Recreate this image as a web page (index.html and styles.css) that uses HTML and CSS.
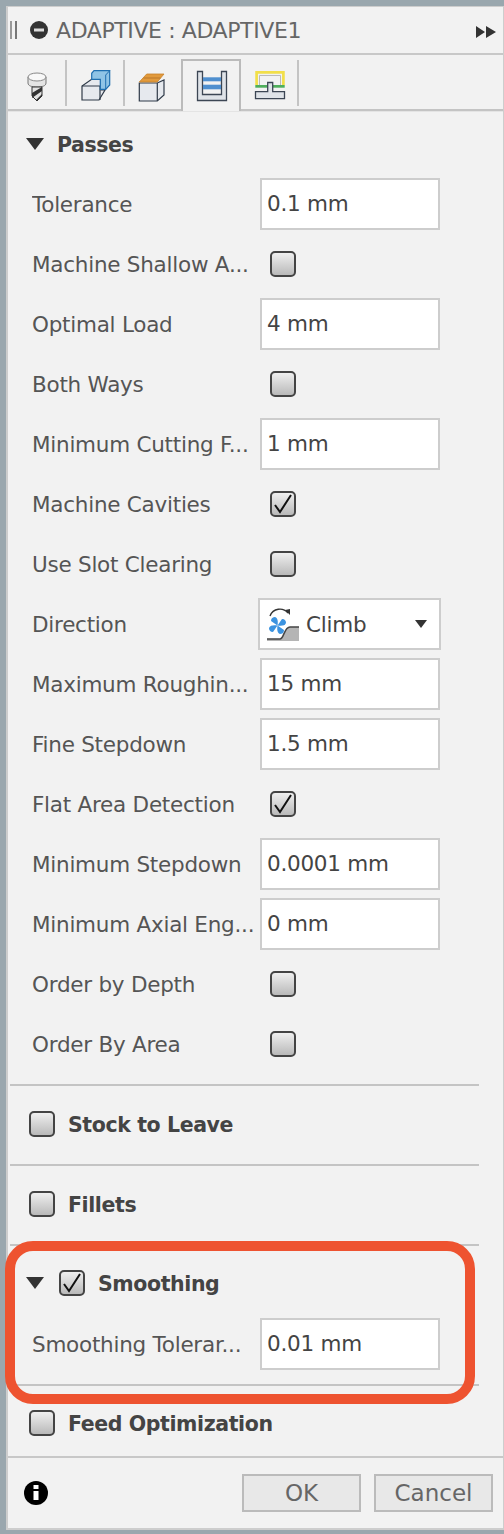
FILE: index.html
```html
<!DOCTYPE html>
<html lang="en">
<head>
<meta charset="UTF-8">
<title>ADAPTIVE : ADAPTIVE1</title>
<link rel="stylesheet" href="styles.css">
</head>
<body>
  <div class="panel">
    <div class="titlebar">
      <span class="grip"></span>
      <svg class="title-icon" width="18" height="18" viewBox="0 0 18 18"><circle cx="9" cy="9" r="9" fill="#333"/><rect x="4" y="7.5" width="10" height="3" fill="#ddd"/></svg>
      <span class="title">ADAPTIVE : ADAPTIVE1</span>
      <svg class="title-more" width="20" height="12" viewBox="0 0 20 12"><path d="M0 0 L9 6 L0 12Z M10 0 L20 6 L10 12Z" fill="#333"/></svg>
    </div>

    <div class="tabs">
      <div class="tab">
        <svg width="36" height="36" viewBox="0 0 36 36">
          <path d="M9 9 V15 C9 18 13 19 18 19 C23 19 27 18 27 15 V9Z" fill="#e4e4e4" stroke="#777"/>
          <ellipse cx="18" cy="9" rx="9" ry="4" fill="#f8f8f8" stroke="#888"/>
          <path d="M13 19 H23 V28 L18 33 L13 28Z" fill="#e2e2e2" stroke="#333"/>
          <path d="M13 25 L23 19 V23 L13 30Z M17 32 L23 26 V28 L18 33Z" fill="#333"/>
        </svg>
      </div>
      <div class="tab">
        <svg width="36" height="36" viewBox="0 0 36 36">
          <path d="M5 32 V18 L15 11 H24 V22 L28 22 L22 32Z" fill="#e6e9ee" stroke="#2f3a48" stroke-width="1.2"/>
          <path d="M5 18 H23 V32" fill="none" stroke="#2f3a48" stroke-width="1.2"/>
          <path d="M14.7 11.3 V5.3 L17 2.7 H32.7 V17 L28.7 21.3 H23.3 V11.3Z" fill="#8fc4e6" stroke="#1f6fb0" stroke-width="1.2"/>
          <path d="M28.7 7 L32.7 2.7 M28.7 7 V21.3" fill="none" stroke="#1f6fb0" stroke-width="1"/>
        </svg>
      </div>
      <div class="tab">
        <svg width="36" height="36" viewBox="0 0 36 36">
          <path d="M4.3 15 H22.3 L29 12 V27 L22.3 33 H4.3Z" fill="#e6e9ee" stroke="#2f3a48" stroke-width="1.2"/>
          <path d="M22.3 15 V33" fill="none" stroke="#2f3a48" stroke-width="1.2"/>
          <path d="M4.3 14 L11.7 6 H29 L22.3 14Z" fill="#e29a3c" stroke="#c8822a" stroke-width=".8"/>
          <path d="M8.5 10 H25.5" stroke="#b9772a"/>
        </svg>
      </div>
      <div class="tab tab-active">
        <svg width="36" height="36" viewBox="0 0 36 36">
          <path d="M4.5 3.5 H9.5 V26.5 H28.5 V3.5 H33.5 V32.5 H4.5Z" fill="#dfe3e8" stroke="#3c4654" stroke-width="1.3"/>
          <rect x="10" y="9.3" width="18" height="4" fill="#4f8fcf"/>
          <rect x="10" y="16.7" width="18" height="4.6" fill="#4f8fcf"/>
        </svg>
      </div>
      <div class="tab">
        <svg width="36" height="36" viewBox="0 0 36 36">
          <path d="M5.6 17 V4.3 H32.4 V17" fill="none" stroke="#f2df4a" stroke-width="2.7"/>
          <path d="M8.5 17 V7.5 H29.5 V17" fill="none" stroke="#bbb" stroke-width="1"/>
          <rect x="4.3" y="17" width="29.4" height="2.7" fill="#4fae5c"/>
          <path d="M4.5 23.7 H16.7 V14.5 H21.7 V23.7 H33.5 V30.7 H4.5Z" fill="#dfe3e8" stroke="#3c4654" stroke-width="1.3"/>
        </svg>
      </div>
    </div>

    <div class="content">
      <section class="group group-passes">
        <div class="group-head">
          <span class="caret"></span>
          <span class="group-title">Passes</span>
        </div>
        <div class="row"><span class="label">Tolerance</span><div class="field">0.1 mm</div></div>
        <div class="row"><span class="label">Machine Shallow A...</span><span class="check"></span></div>
        <div class="row"><span class="label">Optimal Load</span><div class="field">4 mm</div></div>
        <div class="row"><span class="label">Both Ways</span><span class="check"></span></div>
        <div class="row"><span class="label">Minimum Cutting F...</span><div class="field">1 mm</div></div>
        <div class="row"><span class="label">Machine Cavities</span><span class="check is-on"><svg width="22" height="22" viewBox="0 0 22 22"><path d="M3 12 L8 19 L19 2" fill="none" stroke="#111" stroke-width="2"/></svg></span></div>
        <div class="row"><span class="label">Use Slot Clearing</span><span class="check"></span></div>
        <div class="row">
          <span class="label">Direction</span>
          <div class="select">
            <svg width="34" height="34" viewBox="0 0 34 34">
              <path d="M1 32 H14 C18 32 18 20 24 20 H33 V34 H1Z" fill="#b5b5b5"/>
              <path d="M1 32 H14 C18 32 18 20 24 20 H33" fill="none" stroke="#444" stroke-width="1.5"/>
              <path d="M4 9 C7 1 17 0 22 6" fill="none" stroke="#333" stroke-width="1.4"/>
              <path d="M19 3 L24 2 L24 8Z" fill="#333"/>
              <g fill="#3b93e0">
                <path d="M11.5 18.5 L5 14 C5 11 7 10 9 10 C12 11 12 15 11.5 18.5Z"/>
                <path d="M11.5 18.5 L5 14 C5 11 7 10 9 10 C12 11 12 15 11.5 18.5Z" transform="rotate(90 11.5 18.5)"/>
                <path d="M11.5 18.5 L5 14 C5 11 7 10 9 10 C12 11 12 15 11.5 18.5Z" transform="rotate(180 11.5 18.5)"/>
                <path d="M11.5 18.5 L5 14 C5 11 7 10 9 10 C12 11 12 15 11.5 18.5Z" transform="rotate(270 11.5 18.5)"/>
              </g>
            </svg>
            <span class="select-text">Climb</span>
            <span class="select-caret"></span>
          </div>
        </div>
        <div class="row"><span class="label">Maximum Roughin...</span><div class="field">15 mm</div></div>
        <div class="row"><span class="label">Fine Stepdown</span><div class="field">1.5 mm</div></div>
        <div class="row"><span class="label">Flat Area Detection</span><span class="check is-on"><svg width="22" height="22" viewBox="0 0 22 22"><path d="M3 12 L8 19 L19 2" fill="none" stroke="#111" stroke-width="2"/></svg></span></div>
        <div class="row"><span class="label">Minimum Stepdown</span><div class="field">0.0001 mm</div></div>
        <div class="row"><span class="label">Minimum Axial Eng...</span><div class="field">0 mm</div></div>
        <div class="row"><span class="label">Order by Depth</span><span class="check"></span></div>
        <div class="row"><span class="label">Order By Area</span><span class="check"></span></div>
      </section>

      <section class="group group-single">
        <div class="group-head"><span class="check check-head"></span><span class="group-title">Stock to Leave</span></div>
      </section>
      <section class="group group-single">
        <div class="group-head"><span class="check check-head"></span><span class="group-title">Fillets</span></div>
      </section>
      <section class="group group-smoothing">
        <div class="group-head">
          <span class="caret"></span>
          <span class="check is-on check-small"><svg width="22" height="22" viewBox="0 0 22 22"><path d="M3 12 L8 19 L19 2" fill="none" stroke="#111" stroke-width="2"/></svg></span>
          <span class="group-title">Smoothing</span>
        </div>
        <div class="row row-smoothing"><span class="label">Smoothing Tolerar...</span><div class="field">0.01 mm</div></div>
        <div class="ring"></div>
      </section>
      <section class="group group-last">
        <div class="group-head"><span class="check check-head"></span><span class="group-title">Feed Optimization</span></div>
      </section>
    </div>

    <div class="footer">
      <svg class="info" width="24" height="24" viewBox="0 0 24 24"><circle cx="12" cy="12" r="12" fill="#000"/><rect x="9.5" y="4" width="5" height="4" fill="#fff"/><rect x="9.5" y="10" width="5" height="9" fill="#fff"/></svg>
      <button class="btn">OK</button>
      <button class="btn">Cancel</button>
    </div>
  </div>
</body>
</html>
```

FILE: styles.css
```css
html, body {
  margin: 0;
  height: 100%;
}
body {
  background-color: #9aa7ae;
  padding: 6px 0 4px 6px;
  box-sizing: border-box;
  font-family: "DejaVu Sans", sans-serif;
  font-size: 21.5px;
  letter-spacing: -0.25px;
  color: #555;
}
.panel {
  height: 100%;
  background-color: #f2f2f2;
  border: 2px solid #cdcdcd;
  border-right-width: 1px;
  border-top-width: 1px;
  box-sizing: border-box;
  display: flex;
  flex-direction: column;
}

/* title */
.titlebar {
  height: 46px;
  border-bottom: 2px solid #c8c8c8;
  display: flex;
  align-items: center;
  flex-shrink: 0;
  padding: 0 7px 0 2px;
}
.grip {
  width: 3px;
  height: 18px;
  border-left: 2px solid #999;
  border-right: 2px solid #777;
  margin-right: 13px;
}
.title-icon {
  margin-right: 8px;
}
.title {
  font-size: 22px;
  letter-spacing: -0.4px;
  color: #666;
  flex: 1;
  white-space: nowrap;
}
.title-more {
  margin-top: 4px;
}

/* tabs */
.tabs {
  height: 54px;
  padding-left: 1px;
  display: flex;
  flex-shrink: 0;
  border-bottom: 2px solid #c4c4c4;
  box-shadow: 0 1px 0 #e4e4e4;
}
.tab {
  width: 58px;
  height: 46px;
  margin-top: 5px;
  padding-top: 8px;
  box-sizing: border-box;
  border-right: 2px solid #c4c4c4;
  display: flex;
  align-items: flex-start;
  justify-content: center;
}
.tab svg {
  flex-shrink: 0;
}
.tab-active {
  width: 60px;
  height: 52px;
  margin: 4px 0 -2px -2px;
  padding-top: 7px;
  border: 2px solid #bbb;
  border-bottom: 0;
  background-color: #f2f2f2;
}

/* groups */
.content {
  flex: 1;
  min-height: 0;
}
.group {
  position: relative;
  margin: 0 24px 0 2px;
  border-bottom: 2px solid #c4c4c4;
}
.group-passes {
  padding-top: 3px;
  padding-bottom: 10px;
}
.group-single {
  height: 75px;
  padding-bottom: 3px;
  display: flex;
  align-items: center;
}
.group-smoothing {
  height: 131px;
  padding-top: 7px;
}
.group-last {
  padding-top: 7px;
  border-bottom: 0;
}
.group-head {
  height: 60px;
  display: flex;
  align-items: center;
  padding-left: 16px;
  font-size: 20.5px;
  font-weight: bold;
  letter-spacing: -0.4px;
  color: #444;
}
.caret {
  width: 0;
  height: 0;
  border-left: 9px solid transparent;
  border-right: 9px solid transparent;
  border-top: 12px solid #333;
  margin-right: 13px;
}
.group-title {
  white-space: nowrap;
  margin-top: 2px;
}
.row {
  height: 60px;
  display: flex;
  align-items: center;
  padding-left: 22px;
}
.row-smoothing {
  margin-top: 1px;
}
.label {
  width: 228px;
  flex-shrink: 0;
  white-space: nowrap;
  overflow: hidden;
}
.field {
  width: 180px;
  height: 52px;
  box-sizing: border-box;
  border: 2px solid #cdcdcd;
  background-color: #fff;
  color: #444;
  padding: 0 0 2px 5px;
  display: flex;
  align-items: center;
  white-space: nowrap;
}
.check {
  width: 26px;
  height: 26px;
  box-sizing: border-box;
  border: 2px solid #444;
  border-radius: 5px;
  background: linear-gradient(#efefef, #b9b9b9);
  margin-left: 10px;
  display: flex;
  align-items: center;
  justify-content: center;
  flex-shrink: 0;
}
.check-head {
  margin: 0 13px 0 3px;
}
.check-small {
  margin: 0 13px 0 2px;
}
.select {
  width: 183px;
  height: 52px;
  box-sizing: border-box;
  border: 2px solid #cdcdcd;
  background-color: #fff;
  margin-left: -2px;
  display: flex;
  align-items: center;
  padding-left: 6px;
  color: #444;
}
.select-text {
  margin-left: 6px;
  flex: 1;
}
.select-caret {
  width: 0;
  height: 0;
  border-left: 6px solid transparent;
  border-right: 6px solid transparent;
  border-top: 8px solid #333;
  margin-right: 12px;
}

/* the red highlight drawn on top of the section */
.ring {
  position: absolute;
  left: -5px;
  right: 4px;
  top: -5px;
  bottom: -20px;
  border: 10px solid #ee5330;
  border-radius: 28px;
}

/* footer */
.footer {
  height: 70px;
  flex-shrink: 0;
  border-top: 2px solid #c8c8c8;
  display: flex;
  align-items: center;
  padding: 0 10px 0 16px;
  gap: 13px;
}
.info {
  margin-right: auto;
}
.btn {
  width: 119px;
  height: 38px;
  border: 2px solid #bbb;
  background-color: #e8e8e8;
  color: #666;
  font-family: inherit;
  font-size: 23px;
  padding: 0;
}
```
